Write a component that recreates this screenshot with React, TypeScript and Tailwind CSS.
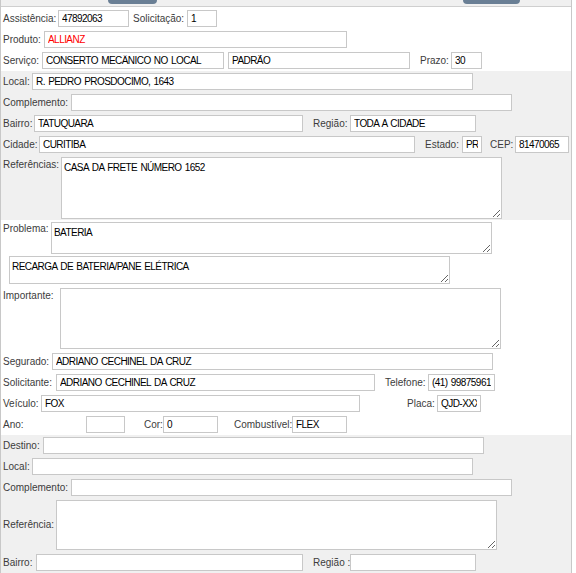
import React from "react";

const LBL = "shrink-0 whitespace-nowrap text-[10px] text-[#3c3c3c] leading-[14px]";
const INP =
  "shrink-0 h-[17px] border border-[#c8c8c8] bg-white px-[3px] py-0 text-[10px] tracking-[-0.55px] [word-spacing:1px] outline-none leading-[15px]";

function L({ w, ml = 0, children, top = false }: { w: number; ml?: number; children: React.ReactNode; top?: boolean }) {
  return (
    <span className={LBL + (top ? " self-start" : "")} style={{ width: w, marginLeft: ml }}>
      {children}
    </span>
  );
}

function I({ w, v = "", red = false }: { w: number; v?: string; red?: boolean }) {
  return (
    <input
      readOnly
      value={v}
      className={INP}
      style={{ width: w, color: red ? "#ff0000" : "#000000" }}
    />
  );
}

function T({ w, h, v = "", ml = 0 }: { w: number; h: number; v?: string; ml?: number }) {
  return (
    <textarea
      readOnly
      value={v}
      className="shrink-0 border border-[#c8c8c8] bg-white px-[2px] pt-[3px] text-[10px] tracking-[-0.55px] [word-spacing:1px] leading-[13px] text-black outline-none"
      style={{ width: w, height: h, marginLeft: ml }}
    />
  );
}

const ROW = "flex items-center";

export default function App() {
  return (
    <div
      className="w-[572px] border-x border-[#c8c8c8] bg-white"
      style={{ fontFamily: '"Liberation Sans", Arial, sans-serif' }}
    >
      {/* top strip */}
      <div className="flex h-[7px] border-b border-[#cfcfcf] bg-[#f0f0f0]">
        <div className="ml-[107px] h-[4px] w-[49px] rounded-b-[6px] bg-[#6a7f95]" />
        <div className="ml-[306px] h-[4px] w-[57px] rounded-b-[6px] bg-[#6a7f95]" />
      </div>

      {/* section 1 */}
      <div className="flex flex-col gap-[4px] bg-white pb-[2px] pl-[2px] pt-[3px]">
        <div className={ROW}>
          <L w={55}>Assistência:</L>
          <I w={71} v="47892063" />
          <L w={54} ml={4}>Solicitação:</L>
          <I w={30} v="1" />
        </div>
        <div className={ROW}>
          <L w={41}>Produto:</L>
          <I w={303} v="ALLIANZ" red />
        </div>
        <div className={ROW}>
          <L w={39}>Serviço:</L>
          <I w={182} v="CONSERTO MECÂNICO NO LOCAL" />
          <div className="ml-[4px]" />
          <I w={182} v="PADRÃO" />
          <L w={31} ml={10}>Prazo:</L>
          <I w={31} v="30" />
        </div>
      </div>

      {/* section 2 */}
      <div className="flex flex-col gap-[4px] bg-[#f0f0f0] pb-[1px] pl-[2px] pt-[2px]">
        <div className={ROW}>
          <L w={29}>Local:</L>
          <I w={441} v="R. PEDRO PROSDOCIMO, 1643" />
        </div>
        <div className={ROW}>
          <L w={68}>Complemento:</L>
          <I w={441} />
        </div>
        <div className={ROW}>
          <L w={31}>Bairro:</L>
          <I w={269} v="TATUQUARA" />
          <L w={37} ml={10}>Região:</L>
          <I w={126} v="TODA A CIDADE" />
        </div>
        <div className={ROW}>
          <L w={36}>Cidade:</L>
          <I w={376} v="CURITIBA" />
          <L w={37} ml={10}>Estado:</L>
          <I w={20} v="PR" />
          <L w={25} ml={8}>CEP:</L>
          <I w={54} v="81470065" />
        </div>
        <div className="flex">
          <L w={58} top>
            <span className="mt-[1px] block">Referências:</span>
          </L>
          <T w={441} h={62} v="CASA DA FRETE NÚMERO 1652" />
        </div>
      </div>

      {/* section 3 */}
      <div className="flex flex-col bg-white pb-[2px] pl-[2px] pt-[2px]">
        <div className="flex">
          <L w={48} top>Problema:</L>
          <T w={441} h={32} v="BATERIA" />
        </div>
        <div className="mt-[2px] flex">
          <T w={441} h={28} v="RECARGA DE BATERIA/PANE ELÉTRICA" ml={6} />
        </div>
        <div className="mt-[4px] flex">
          <L w={57} top>
            <span className="mt-[1px] block">Importante:</span>
          </L>
          <T w={441} h={61} />
        </div>
        <div className={ROW + " mt-[4px]"}>
          <L w={49}>Segurado:</L>
          <I w={441} v="ADRIANO CECHINEL DA CRUZ" />
        </div>
        <div className={ROW + " mt-[4px]"}>
          <L w={53}>Solicitante:</L>
          <I w={319} v="ADRIANO CECHINEL DA CRUZ" />
          <L w={43} ml={10}>Telefone:</L>
          <I w={67} v="(41) 998759611" />
        </div>
        <div className={ROW + " mt-[4px]"}>
          <L w={38}>Veículo:</L>
          <I w={319} v="FOX" />
          <L w={30} ml={47}>Placa:</L>
          <I w={44} v="QJD-XXXX" />
        </div>
        <div className={ROW + " mt-[4px]"}>
          <L w={83}>Ano:</L>
          <I w={39} />
          <L w={19} ml={19}>Cor:</L>
          <I w={55} v="0" />
          <L w={58} ml={16}>Combustível:</L>
          <I w={55} v="FLEX" />
        </div>
      </div>

      {/* section 4 */}
      <div className="flex flex-col gap-[4px] bg-[#f0f0f0] pb-[6px] pl-[2px] pt-[2px]">
        <div className={ROW}>
          <L w={40}>Destino:</L>
          <I w={441} />
        </div>
        <div className={ROW}>
          <L w={29}>Local:</L>
          <I w={441} />
        </div>
        <div className={ROW}>
          <L w={68}>Complemento:</L>
          <I w={441} />
        </div>
        <div className={ROW}>
          <L w={53}>Referência:</L>
          <T w={441} h={50} />
        </div>
        <div className={ROW}>
          <L w={33}>Bairro:</L>
          <I w={267} />
          <L w={37} ml={10}>Região :</L>
          <I w={126} />
        </div>
      </div>
    </div>
  );
}
